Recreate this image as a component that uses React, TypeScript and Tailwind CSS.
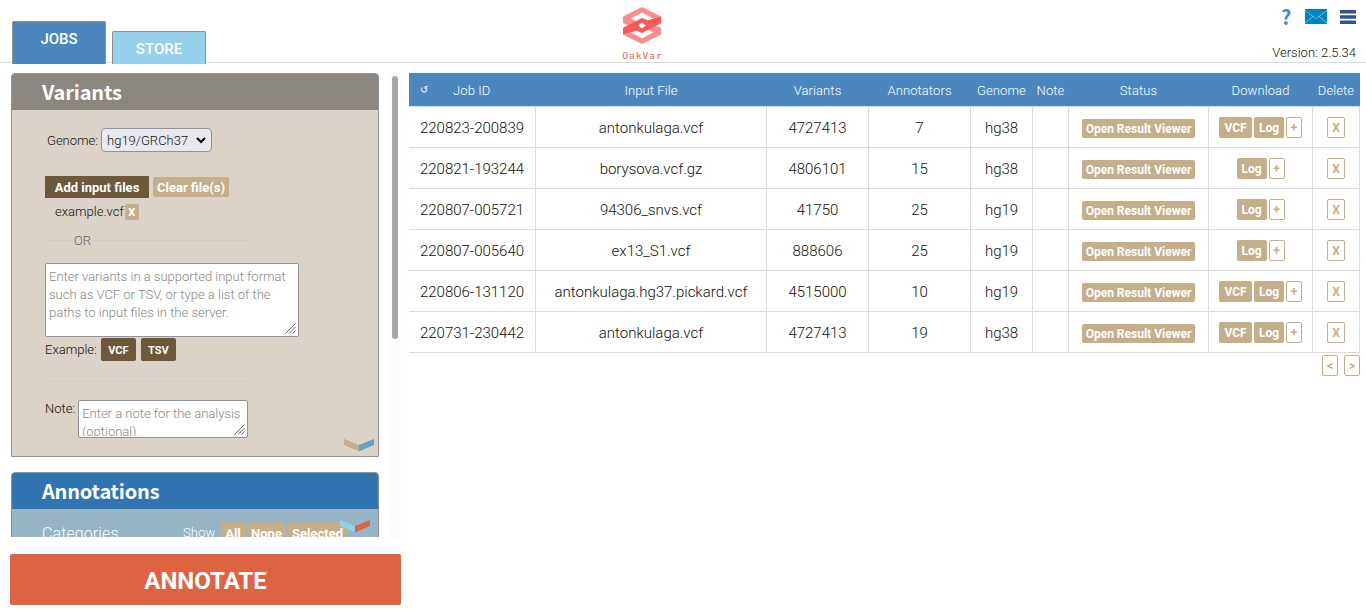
import type { ReactNode } from 'react';

type Job = { id: string; file: string; variants: string; annotators: string; genome: string; vcf: boolean };

const jobs: Job[] = [
  { id: '220823-200839', file: 'antonkulaga.vcf', variants: '4727413', annotators: '7', genome: 'hg38', vcf: true },
  { id: '220821-193244', file: 'borysova.vcf.gz', variants: '4806101', annotators: '15', genome: 'hg38', vcf: false },
  { id: '220807-005721', file: '94306_snvs.vcf', variants: '41750', annotators: '25', genome: 'hg19', vcf: false },
  { id: '220807-005640', file: 'ex13_S1.vcf', variants: '888606', annotators: '25', genome: 'hg19', vcf: false },
  { id: '220806-131120', file: 'antonkulaga.hg37.pickard.vcf', variants: '4515000', annotators: '10', genome: 'hg19', vcf: true },
  { id: '220731-230442', file: 'antonkulaga.vcf', variants: '4727413', annotators: '19', genome: 'hg38', vcf: true },
];

const columns = 'grid grid-cols-[127px_231px_102px_102px_62px_36px_140px_104px_47px]';

function Logo() {
  return (
    <svg width="38" height="38" viewBox="0 0 38 38" className="block">
      <path fill="#fc8d8d" d="M0 9.500 19 0v5.500L8 11.500 19 18v7L0 16z" />
      <path fill="#fc8d8d" d="M19 0l19 9.500-8 2L19 5.500z" />
      <path fill="#fc8d8d" d="M38 21v6.500L19 37v-5.500l11-6L19 19v-7z" />
      <path fill="#fc8d8d" d="M0 27.500l8-2 11 6V37z" />
      <path fill="#fa5757" d="M0 21 19 11l6 2.500 13-4V16L19 26l-6-2.500-13 4z" />
      <path fill="#fa5757" d="M25 13.500l13-4v6.500L25 22.500zM0 21l13-6.500v9L0 27.500z" />
      <path fill="#fff" d="M19 15.500l4 3-4 3-4-3z" />
    </svg>
  );
}

function Chevron({ left, right }: { left: string; right: string }) {
  return (
    <svg width="30" height="13" viewBox="0 0 30 13" className="block">
      <path className={left} d="M0 0l15 6v6.500L0 6z" />
      <path className={right} d="M15 6l15-6v6l-15 6.500z" />
    </svg>
  );
}

function Grip() {
  return (
    <svg width="11" height="11" viewBox="0 0 11 11" className="absolute right-[2px] bottom-[2px]">
      <path d="M.5 10.500l10-10M4 10.500l6.500-6.500M7.500 10.500l3-3" stroke="#666" strokeWidth="1" />
    </svg>
  );
}

function Cell({ children }: { children?: ReactNode }) {
  return <div className="flex items-center justify-center border-r border-b border-[#dcdcdc]">{children}</div>;
}

function Value({ children }: { children: ReactNode }) {
  return (
    <Cell>
      <span className="pt-[2px]">{children}</span>
    </Cell>
  );
}

function Outline({ children, className }: { children: ReactNode; className: string }) {
  return (
    <button className={`h-[21px] rounded-[2px] border border-[#c5ae8a] bg-white text-[12px] leading-[20px] font-bold text-[#c5ae8a] ${className}`}>
      {children}
    </button>
  );
}

function Header() {
  return (
    <header className="grid h-[63px] grid-cols-[600px_84px_1fr] border-b border-[#dcdcdc]">
      <div className="flex items-start pl-3 text-[15px] font-medium text-white">
        <div className="mt-[21px] h-[43px] w-[94px] rounded-t-[2px] border border-b-0 border-[#8f8f8f] bg-[#4a87be] text-center leading-[34px]">JOBS</div>
        <div className="mt-[31px] ml-[6px] h-[33px] w-[94px] rounded-t-[2px] border border-b-0 border-[#8f8f8f] bg-[#95d1ea] text-center leading-[34px]">STORE</div>
      </div>
      <div className="flex flex-col items-center pt-[7px]">
        <Logo />
        <div className="mt-[5px] h-3 pl-px font-['DejaVu_Sans_Mono'] text-[9.500px] leading-3 font-normal tracking-[1px] text-[#fa5757]">OakVar</div>
      </div>
      <div className="flex flex-col items-end pr-[10px]">
        <div className="flex h-[33px] items-center">
          <span className="w-[10px] font-['Noto_Sans_CJK_SC'] text-[20px] leading-[33px] font-bold text-[#4a87be]">?</span>
          <svg width="22" height="15" viewBox="0 0 22 15" className="ml-[14px]">
            <path fill="#0083c1" d="M0 0h22v15H0z" />
            <path d="M0 1.500l11 8 11-8M0 14l8-6.500M22 14l-8-6.500" fill="none" stroke="#d4ebf6" strokeWidth=".8" strokeDasharray="1.500 .8" />
          </svg>
          <svg width="16" height="14" viewBox="0 0 16 14" className="ml-[13px]">
            <path fill="#33528b" d="M0 0h16v3.500H0zM0 5.250h16v3.500H0zM0 10.500h16V14H0z" />
          </svg>
        </div>
        <div className="mt-[11px] text-[13px] leading-[18px]">Version: 2.5.34</div>
      </div>
    </header>
  );
}

function Variants() {
  return (
    <section className="relative h-[384px] overflow-hidden rounded-t-[4px] border border-[#8f8f94] bg-[#dbd3c8]">
      <h2 className="h-[36px] bg-[#8c8680] pl-[30px] font-['Noto_Sans_CJK_SC'] text-[20px] leading-[35px] font-bold tracking-[-0.15px] text-white">Variants</h2>
      <div className="pl-[33px] text-[13px]">
        <div className="mt-[18px] flex h-6 items-center pl-[2px]">
          <span className="pt-px">Genome:</span>
          <div className="ml-[3px] flex h-6 w-[111px] items-center justify-between rounded-[4px] border border-[#8f8f9d] bg-[#e9e9ed] pr-[5px] pl-[5px] text-[13px]">
            <span className="pt-px">hg19/GRCh37</span>
            <svg width="10" height="7" viewBox="0 0 10 7"><path d="M1 1l4 4 4-4" fill="none" stroke="#000" strokeWidth="2" /></svg>
          </div>
        </div>
        <div className="mt-6 flex h-[22px] items-center font-bold text-white">
          <button className="h-[22px] w-[104px] bg-[#6d583a] leading-[24px]">Add input files</button>
          <button className="ml-1 h-5 w-[76px] rounded-[2px] bg-[#c5ae8a] leading-[22px]">Clear file(s)</button>
        </div>
        <div className="mt-[6px] flex h-4 items-center pl-[10px]">
          <span>example.vcf</span>
          <button className="ml-px h-4 w-[14px] rounded-[2px] bg-[#c5ae8a] text-[11px] leading-[17px] font-bold text-white">X</button>
        </div>
        <div className="mt-[11px] flex h-[18px] w-[207px] items-center text-[#666]">
          <span className="w-[29px] border-t border-dotted border-[#c8c6c6]" />
          <span className="pt-[2px]">OR</span>
          <span className="flex-1 border-t border-dotted border-[#c8c6c6]" />
        </div>
        <div className="relative mt-[14px] h-[74px] w-[254px] rounded-[2px] border border-[#8f8f9d] bg-white px-[3px] pt-[4px] leading-[18px] whitespace-nowrap text-[#888]">
          Enter variants in a supported input format<br />such as VCF or TSV, or type a list of the<br />paths to input files in the server.
          <Grip />
        </div>
        <div className="mt-px flex h-[23px] items-center">
          <span>Example:</span>
          <button className="ml-[4px] h-[23px] w-[35px] rounded-[2px] bg-[#6d583a] text-[11px] leading-[25px] font-bold text-white">VCF</button>
          <button className="ml-[5px] h-[23px] w-[35px] rounded-[2px] bg-[#6d583a] text-[11px] leading-[25px] font-bold text-white">TSV</button>
        </div>
        <div className="mt-[20px] w-[207px] border-t border-dotted border-[#c8c6c6]" />
        <div className="mt-[18px] flex">
          <span className="leading-[17px]">Note:</span>
          <div className="relative ml-[3px] h-[38px] w-[170px] rounded-[2px] border border-[#8f8f9d] bg-white px-[3px] pt-[4px] leading-[18px] whitespace-nowrap text-[#888]">
            <div className="h-[31px] overflow-hidden">Enter a note for the analysis<br />(optional)</div>
            <Grip />
          </div>
        </div>
      </div>
      <div className="absolute right-[4px] bottom-[4px]"><Chevron left="fill-[#c5ae8a]" right="fill-[#60a3cb]" /></div>
    </section>
  );
}

function Annotations() {
  return (
    <section className="relative mt-[15px] h-[240px] rounded-t-[4px] border border-[#8f8f94] bg-[#98b5c6]">
      <h2 className="h-[36px] rounded-t-[3px] bg-[#3074b1] pl-[30px] font-['Noto_Sans_CJK_SC'] text-[20px] leading-[35px] font-bold tracking-[-0.2px] text-white">Annotations</h2>
      <div className="flex items-start pt-[12px] pl-[30px] text-white">
        <span className="w-[141px] text-[16px] leading-[25px] tracking-[0.1px]">Categories</span>
        <span className="w-[38px] text-[13px] leading-[23px] tracking-[0.15px]">Show</span>
        <div className="flex gap-[2px] pt-px text-[13px] leading-[23px] font-bold">
          <span className="w-6 rounded-[2px] bg-[#c5ae8a] text-center">All</span>
          <span className="w-[39px] rounded-[2px] bg-[#c5ae8a] text-center">None</span>
          <span className="w-[59px] rounded-[2px] bg-[#c5ae8a] text-center">Selected</span>
        </div>
      </div>
      <div className="absolute top-[47px] right-[8px]"><Chevron left="fill-[#8fd0eb]" right="fill-[#de6343]" /></div>
    </section>
  );
}

function JobsTable() {
  return (
    <main className="w-[951px] text-[15px]">
      <div className={`${columns} h-[34px] border-b border-[#dcdcdc] bg-[#4a87be] text-center text-[13px] leading-[35px] tracking-[0.1px] text-white *:pr-px`}>
        <div className="flex pl-[10px]"><span className="w-[11px] font-['DejaVu_Sans'] text-[10px] leading-[33px]">↺</span><span className="ml-[23px]">Job ID</span></div>
        <div>Input File</div><div>Variants</div><div>Annotators</div><div>Genome</div><div>Note</div><div>Status</div><div>Download</div><div>Delete</div>
      </div>
      {jobs.map((job) => (
        <div key={job.id} className={`${columns} h-[41px]`}>
          <Value>{job.id}</Value>
          <Value>{job.file}</Value>
          <Value>{job.variants}</Value>
          <Value>{job.annotators}</Value>
          <Value>{job.genome}</Value>
          <Cell />
          <Cell><button className="mt-[3px] h-[19px] w-[113px] rounded-[2px] bg-[#c5ae8a] text-[12px] leading-[20px] font-bold text-white">Open Result Viewer</button></Cell>
          <Cell>
            <div className="flex gap-[2px] text-[12px] leading-[22px] font-bold text-white">
              {job.vcf && <button className="h-[21px] w-[33px] rounded-[2px] bg-[#c5ae8a]">VCF</button>}
              <button className="h-[21px] w-[30px] rounded-[2px] bg-[#c5ae8a]">Log</button>
              <Outline className="w-4">+</Outline>
            </div>
          </Cell>
          <Cell><Outline className="w-[18px]">X</Outline></Cell>
        </div>
      ))}
      <div className="mt-[2px] flex justify-end gap-[6px]">
        <Outline className="w-4">&lt;</Outline>
        <Outline className="w-4">&gt;</Outline>
      </div>
    </main>
  );
}

export default function App() {
  return (
    <div className="h-[612px] w-[1366px] overflow-hidden bg-white font-['Roboto',sans-serif] font-light text-[#111]">
      <Header />
      <div className="flex pt-[10px]">
        <div className="w-[409px]">
          <div className="flex h-[464px] overflow-hidden pl-[11px]">
            <div className="w-[368px]"><Variants /><Annotations /></div>
            <div className="ml-[10px] h-[464px] w-3 bg-[#fbfbfb] pt-[3px] pl-[3px]"><div className="h-[263px] w-[6px] rounded-full bg-[#a6a6a6]" /></div>
          </div>
          <button className="mt-[17px] ml-[10px] h-[51px] w-[391px] rounded-[2px] bg-[#de6343] pt-[2px] text-[24px] font-bold text-white">ANNOTATE</button>
        </div>
        <JobsTable />
      </div>
    </div>
  );
}
